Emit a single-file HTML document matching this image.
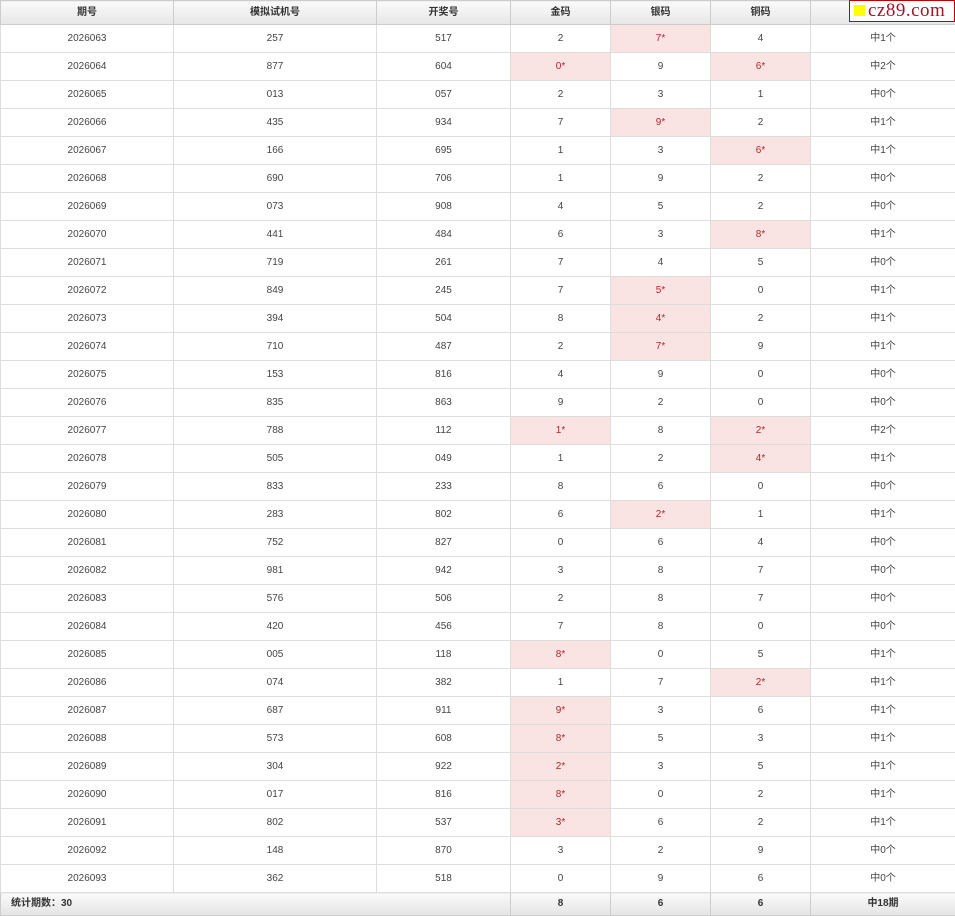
<!DOCTYPE html><html><head><meta charset="utf-8"><style>
body{margin:0;background:#fff;font-family:"Liberation Sans","Noto Sans CJK SC",sans-serif;font-size:10px;color:#444}
table{border-collapse:collapse;table-layout:fixed;width:955px;position:absolute;left:0;top:0}
td,th{border:1px solid #ddd;text-align:center;padding:0;height:27px;line-height:12px;vertical-align:middle;overflow:hidden}
th{height:23px;background:linear-gradient(#fafafa,#e6e6e6);font-weight:bold;color:#333;border-color:#ccc}
td.h{background:#fae3e3;color:#b3262a}
tr.f td{height:22px;background:linear-gradient(#fafafa,#e4e4e4);font-weight:bold;border-color:#ccc;color:#333}
.logo{position:absolute;left:849px;top:0;width:104px;height:20px;border:1px solid #b00;background:#fff;font-family:"Liberation Serif",serif;font-size:19px;color:#a0142a;line-height:20px;letter-spacing:0.5px}
.logo i{display:inline-block;width:11px;height:11px;background:#ff0;margin:0 3px 0 4px;vertical-align:0px}
</style></head><body>
<table>
<colgroup><col style="width:173px"><col style="width:203px"><col style="width:134px"><col style="width:100px"><col style="width:100px"><col style="width:100px"><col style="width:145px"></colgroup>
<tr><th>期号</th><th>模拟试机号</th><th>开奖号</th><th>金码</th><th>银码</th><th>铜码</th><th></th></tr>
<tr><td>2026063</td><td>257</td><td>517</td><td>2</td><td class="h">7*</td><td>4</td><td>中1个</td></tr>
<tr><td>2026064</td><td>877</td><td>604</td><td class="h">0*</td><td>9</td><td class="h">6*</td><td>中2个</td></tr>
<tr><td>2026065</td><td>013</td><td>057</td><td>2</td><td>3</td><td>1</td><td>中0个</td></tr>
<tr><td>2026066</td><td>435</td><td>934</td><td>7</td><td class="h">9*</td><td>2</td><td>中1个</td></tr>
<tr><td>2026067</td><td>166</td><td>695</td><td>1</td><td>3</td><td class="h">6*</td><td>中1个</td></tr>
<tr><td>2026068</td><td>690</td><td>706</td><td>1</td><td>9</td><td>2</td><td>中0个</td></tr>
<tr><td>2026069</td><td>073</td><td>908</td><td>4</td><td>5</td><td>2</td><td>中0个</td></tr>
<tr><td>2026070</td><td>441</td><td>484</td><td>6</td><td>3</td><td class="h">8*</td><td>中1个</td></tr>
<tr><td>2026071</td><td>719</td><td>261</td><td>7</td><td>4</td><td>5</td><td>中0个</td></tr>
<tr><td>2026072</td><td>849</td><td>245</td><td>7</td><td class="h">5*</td><td>0</td><td>中1个</td></tr>
<tr><td>2026073</td><td>394</td><td>504</td><td>8</td><td class="h">4*</td><td>2</td><td>中1个</td></tr>
<tr><td>2026074</td><td>710</td><td>487</td><td>2</td><td class="h">7*</td><td>9</td><td>中1个</td></tr>
<tr><td>2026075</td><td>153</td><td>816</td><td>4</td><td>9</td><td>0</td><td>中0个</td></tr>
<tr><td>2026076</td><td>835</td><td>863</td><td>9</td><td>2</td><td>0</td><td>中0个</td></tr>
<tr><td>2026077</td><td>788</td><td>112</td><td class="h">1*</td><td>8</td><td class="h">2*</td><td>中2个</td></tr>
<tr><td>2026078</td><td>505</td><td>049</td><td>1</td><td>2</td><td class="h">4*</td><td>中1个</td></tr>
<tr><td>2026079</td><td>833</td><td>233</td><td>8</td><td>6</td><td>0</td><td>中0个</td></tr>
<tr><td>2026080</td><td>283</td><td>802</td><td>6</td><td class="h">2*</td><td>1</td><td>中1个</td></tr>
<tr><td>2026081</td><td>752</td><td>827</td><td>0</td><td>6</td><td>4</td><td>中0个</td></tr>
<tr><td>2026082</td><td>981</td><td>942</td><td>3</td><td>8</td><td>7</td><td>中0个</td></tr>
<tr><td>2026083</td><td>576</td><td>506</td><td>2</td><td>8</td><td>7</td><td>中0个</td></tr>
<tr><td>2026084</td><td>420</td><td>456</td><td>7</td><td>8</td><td>0</td><td>中0个</td></tr>
<tr><td>2026085</td><td>005</td><td>118</td><td class="h">8*</td><td>0</td><td>5</td><td>中1个</td></tr>
<tr><td>2026086</td><td>074</td><td>382</td><td>1</td><td>7</td><td class="h">2*</td><td>中1个</td></tr>
<tr><td>2026087</td><td>687</td><td>911</td><td class="h">9*</td><td>3</td><td>6</td><td>中1个</td></tr>
<tr><td>2026088</td><td>573</td><td>608</td><td class="h">8*</td><td>5</td><td>3</td><td>中1个</td></tr>
<tr><td>2026089</td><td>304</td><td>922</td><td class="h">2*</td><td>3</td><td>5</td><td>中1个</td></tr>
<tr><td>2026090</td><td>017</td><td>816</td><td class="h">8*</td><td>0</td><td>2</td><td>中1个</td></tr>
<tr><td>2026091</td><td>802</td><td>537</td><td class="h">3*</td><td>6</td><td>2</td><td>中1个</td></tr>
<tr><td>2026092</td><td>148</td><td>870</td><td>3</td><td>2</td><td>9</td><td>中0个</td></tr>
<tr><td>2026093</td><td>362</td><td>518</td><td>0</td><td>9</td><td>6</td><td>中0个</td></tr>
<tr class="f"><td colspan="3" style="text-align:left;padding-left:10px">统计期数：30</td><td>8</td><td>6</td><td>6</td><td>中18期</td></tr>
</table>
<div class="logo"><i></i>cz89.com</div>
</body></html>
